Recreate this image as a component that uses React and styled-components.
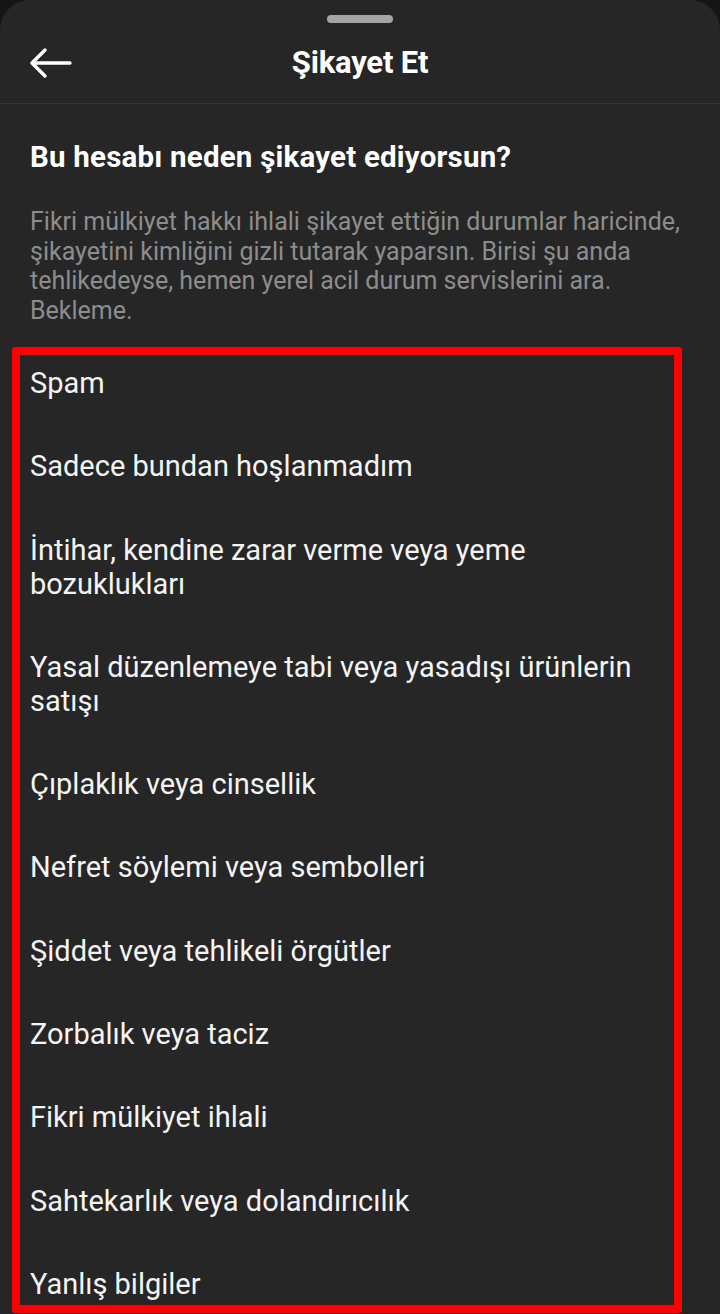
import styled, { createGlobalStyle } from 'styled-components';

const GlobalStyle = createGlobalStyle`
  html, body {
    margin: 0;
    padding: 0;
    background: #151515;
  }
  body {
    font-family: Roboto, "Noto Sans", sans-serif;
    -webkit-font-smoothing: antialiased;
  }
`;

const reasons = [
  'Spam',
  'Sadece bundan hoşlanmadım',
  'İntihar, kendine zarar verme veya yeme bozuklukları',
  'Yasal düzenlemeye tabi veya yasadışı ürünlerin satışı',
  'Çıplaklık veya cinsellik',
  'Nefret söylemi veya sembolleri',
  'Şiddet veya tehlikeli örgütler',
  'Zorbalık veya taciz',
  'Fikri mülkiyet ihlali',
  'Sahtekarlık veya dolandırıcılık',
  'Yanlış bilgiler',
];

const BackArrow = () => (
  <svg width="44" height="32" viewBox="0 0 44 32" fill="none">
    <path
      d="M42 16H4M17 3L4 16l13 13"
      stroke="#fff"
      strokeWidth="3.4"
      strokeLinecap="round"
      strokeLinejoin="round"
    />
  </svg>
);

export default function App() {
  return (
    <>
      <GlobalStyle />
      <Sheet>
        <Handle />
        <Header>
          <BackButton aria-label="Geri">
            <BackArrow />
          </BackButton>
          <Title>Şikayet Et</Title>
        </Header>
        <Body>
          <Question>Bu hesabı neden şikayet ediyorsun?</Question>
          <Note>
            Fikri mülkiyet hakkı ihlali şikayet ettiğin durumlar haricinde,
            şikayetini kimliğini gizli tutarak yaparsın. Birisi şu anda
            tehlikedeyse, hemen yerel acil durum servislerini ara. Bekleme.
          </Note>
        </Body>
        <ReasonList>
          {reasons.map((r) => (
            <Reason key={r}>{r}</Reason>
          ))}
        </ReasonList>
      </Sheet>
    </>
  );
}

const Sheet = styled.div`
  width: 720px;
  height: 1314px;
  overflow: hidden;
  background: #262626;
  border-radius: 30px 30px 0 0;
  display: flex;
  flex-direction: column;
`;

const Handle = styled.div`
  align-self: center;
  width: 66px;
  height: 8px;
  border-radius: 4px;
  background: #a5a5a5;
  margin-top: 15px;
`;

const Header = styled.header`
  position: relative;
  height: 80px;
  display: flex;
  align-items: center;
  justify-content: center;
  border-bottom: 1px solid #353535;
`;

const BackButton = styled.button`
  position: absolute;
  left: 28px;
  top: 24px;
  padding: 0;
  border: none;
  background: none;
  display: flex;
`;

const Title = styled.h1`
  margin: 0 0 2px;
  font-size: 31px;
  font-weight: 700;
  color: #fff;
  letter-spacing: -0.2px;
`;

const Body = styled.div`
  padding: 35px 30px 0;
`;

const Question = styled.h2`
  margin: 0;
  font-size: 29.5px;
  font-weight: 700;
  color: #fff;
  letter-spacing: 0.2px;
  line-height: 36px;
`;

const Note = styled.p`
  margin: 32px 0 0;
  font-size: 25px;
  line-height: 29.5px;
  color: #8d8d8d;
`;

const ReasonList = styled.ul`
  list-style: none;
  margin: 22px 0 1px 12px;
  padding: 11px 10px 0;
  width: 670px;
  box-sizing: border-box;
  border: 8px solid #ff0000;
  border-radius: 3px;
  flex: 1;
`;

const Reason = styled.li`
  font-size: 29px;
  line-height: 34px;
  color: #f4f4f4;
  padding: 0 20px 49.3px 0;

  &:last-child {
    padding-bottom: 0;
  }
`;
